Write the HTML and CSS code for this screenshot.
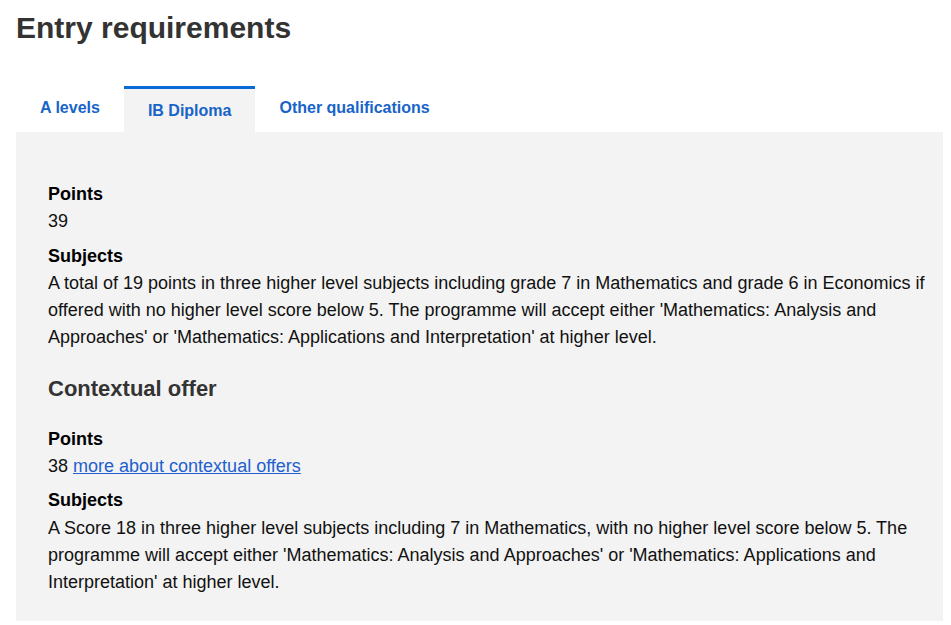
FILE: index.html
```html
<!DOCTYPE html>
<html lang="en">
<head>
<meta charset="utf-8">
<title>Entry requirements</title>
<link rel="stylesheet" href="styles.css">
</head>
<body>
<main class="page">
  <h1 class="title">Entry requirements</h1>
  <nav class="tabs">
    <a class="tab" href="#">A levels</a>
    <a class="tab tab-active" href="#">IB Diploma</a>
    <a class="tab" href="#">Other qualifications</a>
  </nav>
  <section class="panel">
    <dl class="reqs">
      <dt>Points</dt>
      <dd>39</dd>
      <dt>Subjects</dt>
      <dd>A total of 19 points in three higher level subjects including grade 7 in Mathematics and grade 6 in Economics if offered with no higher level score below 5. The programme will accept either 'Mathematics: Analysis and Approaches' or 'Mathematics: Applications and Interpretation' at higher level.</dd>
    </dl>
    <h2 class="subhead">Contextual offer</h2>
    <dl class="reqs">
      <dt>Points</dt>
      <dd>38 <a class="link" href="#">more about contextual offers</a></dd>
      <dt>Subjects</dt>
      <dd>A Score 18 in three higher level subjects including 7 in Mathematics, with no higher level score below 5. The programme will accept either 'Mathematics: Analysis and Approaches' or 'Mathematics: Applications and Interpretation' at higher level.</dd>
    </dl>
  </section>
</main>
</body>
</html>
```

FILE: styles.css
```css
html, body {
  margin: 0;
  padding: 0;
  background: #ffffff;
}

body {
  font-family: "Liberation Sans", Arial, sans-serif;
  color: #000;
}

.page {
  padding: 9px 8px 0 16px;
}

.title {
  margin: 0;
  font-size: 30px;
  line-height: 38px;
  font-weight: bold;
  color: #333333;
}

.tabs {
  display: flex;
  align-items: flex-start;
  margin-top: 39px;
}

.tab {
  display: block;
  padding: 12px 24px 11px;
  font-size: 16px;
  line-height: 20px;
  font-weight: bold;
  color: #1764c9;
  text-decoration: none;
}

.tab-active {
  border-top: 3px solid #0b69d6;
  background: #f3f3f3;
}

.panel {
  background: #f3f3f3;
  padding: 49px 8px 17px 32px;
}

.reqs {
  margin: 0;
  font-size: 18px;
  line-height: 27.3px;
}

.reqs dt {
  font-weight: bold;
  color: #000;
}

.reqs dd {
  margin: 0 0 7px;
  color: #111;
}

.subhead {
  margin: 24px 0;
  font-size: 22px;
  line-height: 26px;
  font-weight: bold;
  color: #333333;
}

.link {
  color: #2160cf;
  text-decoration: underline;
}
```
